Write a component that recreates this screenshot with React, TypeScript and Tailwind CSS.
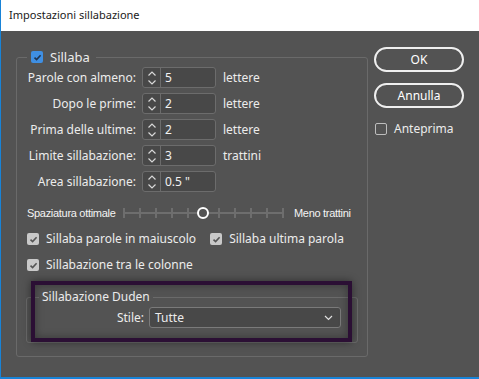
import React from 'react'

const FONT = { fontFamily: '"Noto Sans", "Liberation Sans", sans-serif' }

function SpinIcon() {
  return (
    <svg width="10" height="16" viewBox="0 0 10 16" fill="none" stroke="#d8d8d8" strokeWidth={1.2}>
      <path d="M1.5 5.5L5 2l3.5 3.5" />
      <path d="M1.5 10.5L5 14l3.5-3.5" />
    </svg>
  )
}

function NumField({ value }: { value: string }) {
  return (
    <div className="flex h-[21px] w-[74px] rounded-[3px] border border-[#6c6c6c] bg-[#484848]">
      <div className="flex w-[18px] items-center justify-center border-r border-[#6c6c6c]">
        <SpinIcon />
      </div>
      <div className="flex items-center pl-[4px] text-[12px] text-[#f2f2f2]">{value}</div>
    </div>
  )
}

function GrayCheck() {
  return (
    <span className="flex h-[12px] w-[12px] shrink-0 items-center justify-center rounded-[2px] bg-[#c9c9c9]">
      <svg width="9" height="9" viewBox="0 0 9 9" fill="none" stroke="#555" strokeWidth={1.6}>
        <path d="M1.5 4.6L3.6 6.6 7.6 2.2" />
      </svg>
    </span>
  )
}

const ROWS = [
  { label: 'Parole con almeno:', value: '5', unit: 'lettere' },
  { label: 'Dopo le prime:', value: '2', unit: 'lettere' },
  { label: 'Prima delle ultime:', value: '2', unit: 'lettere' },
  { label: 'Limite sillabazione:', value: '3', unit: 'trattini' },
  { label: 'Area sillabazione:', value: '0.5 "', unit: '' },
]

export default function App() {
  const ticks = Array.from({ length: 11 }, (_, i) => i)
  return (
    <div
      className="flex h-[379px] w-[479px] flex-col overflow-hidden border-b-2 border-l border-[#1883d7] bg-[#535353] text-[12px] text-[#ececec]"
      style={FONT}
    >
      <div className="flex h-[31px] shrink-0 items-center bg-white pl-[8px] text-[11px] text-[#1a1a1a]">
        Impostazioni sillabazione
      </div>

      <div className="flex">
        <fieldset className="ml-[15px] mt-[18px] h-[308px] w-[352px] rounded-[3px] border border-[#6a6a6a]">
          <legend className="ml-[10px] flex h-[16px] items-center px-[4px]">
            <span className="mr-[7px] flex h-[12px] w-[12px] items-center justify-center rounded-[2px] bg-[#3f8fe3]">
              <svg width="9" height="9" viewBox="0 0 9 9" fill="none" stroke="#1f3450" strokeWidth={1.6}>
                <path d="M1.5 4.6L3.6 6.6 7.6 2.2" />
              </svg>
            </span>
            <span className="pr-[2px] text-[13px] leading-[16px]">Sillaba</span>
          </legend>

          <div className="mt-[2px] flex flex-col gap-[5px]">
            {ROWS.map((r) => (
              <div key={r.label} className="flex h-[21px] items-center">
                <div className="w-[120px] whitespace-nowrap pr-[1px] text-right">{r.label}</div>
                <div className="ml-[5px]">
                  <NumField value={r.value} />
                </div>
                <div className="ml-[7px]">{r.unit}</div>
              </div>
            ))}
          </div>

          <div
            className="mt-[13px] flex h-[16px] items-center whitespace-nowrap pl-[10px] text-[11px] text-[#f4f4f4]"
            style={{ fontFamily: '"Liberation Sans", sans-serif', letterSpacing: '-0.3px' }}
          >
            <span className="w-[96px]">Spaziatura ottimale</span>
            <div className="relative h-[16px] w-[161px] shrink-0">
              <div className="absolute left-0 right-0 top-[7px] h-[2px] bg-[#6e6e6e]" />
              {ticks.map((t) =>
                t === 5 ? null : (
                  <div
                    key={t}
                    className="absolute top-[3px] h-[10px] w-[2px] bg-[#6e6e6e]"
                    style={{ left: t * 15.9 }}
                  />
                )
              )}
              <div className="absolute left-[74px] top-[2px] h-[12px] w-[12px] rounded-full border-2 border-white bg-[#535353]" />
            </div>
            <span className="ml-[10px]">Meno trattini</span>
          </div>

          <div className="mt-[9px] flex h-[18px] items-center whitespace-nowrap pl-[10px]">
            <GrayCheck />
            <span className="ml-[7px]">Sillaba parole in maiuscolo</span>
            <span className="ml-[14px]">
              <GrayCheck />
            </span>
            <span className="ml-[7px]">Sillaba ultima parola</span>
          </div>
          <div className="mt-[8px] flex h-[18px] items-center pl-[10px]">
            <GrayCheck />
            <span className="ml-[7px]">Sillabazione tra le colonne</span>
          </div>

          <div className="relative mx-[9px] mt-[15px]">
            <fieldset className="h-[54px] rounded-[3px] border border-[#6a6a6a]">
              <legend className="ml-[12px] px-[3px] leading-[16px]">Sillabazione Duden</legend>
              <div className="mt-[2px] flex items-center">
                <span className="w-[117px] text-right">Stile:</span>
                <div className="ml-[5px] flex h-[21px] w-[192px] items-center justify-between rounded-[3px] border border-[#7a7a7a] bg-[#484848] pl-[5px] pr-[7px]">
                  <span>Tutte</span>
                  <svg width="9" height="6" viewBox="0 0 9 6" fill="none" stroke="#e0e0e0" strokeWidth={1.2}>
                    <path d="M1 1l3.5 3.5L8 1" />
                  </svg>
                </div>
              </div>
            </fieldset>
            <div className="pointer-events-none absolute left-[5px] top-[-8px] h-[61px] w-[321px] border-4 border-[#2b0f34] shadow-[0_0_8px_rgba(0,0,0,0.45),inset_0_0_8px_rgba(0,0,0,0.35)]" />
          </div>
        </fieldset>

        <div className="ml-[6px] mt-[16px] flex w-[90px] flex-col">
          <button className="h-[25px] rounded-full border-2 border-[#efefef] text-[12px] text-white">OK</button>
          <button className="mt-[11px] h-[25px] rounded-full border-2 border-[#efefef] text-[12px] text-white">Annulla</button>
          <div className="mt-[12px] flex items-center pl-[1px]">
            <span className="h-[12px] w-[12px] rounded-[2px] border border-[#bdbdbd]" />
            <span className="ml-[7px]">Anteprima</span>
          </div>
        </div>
      </div>
    </div>
  )
}
